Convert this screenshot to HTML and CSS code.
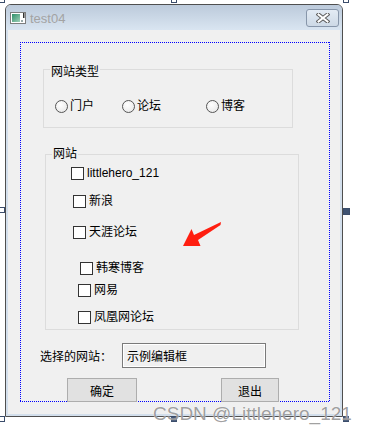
FILE: index.html
```html
<!DOCTYPE html>
<html lang="zh-CN">
<head>
  <meta charset="UTF-8" />
  <title>test04</title>
  <link rel="stylesheet" href="styles.css">
</head>
<body>
  <div class="stage">
    <div class="window">
      <div class="titlebar">
        <svg class="app-icon" width="16" height="12" viewBox="0 0 16 12">
          <defs>
            <linearGradient id="iconFill" x1="0" y1="0" x2="1" y2="1">
              <stop offset="0" stop-color="#2f8f6a"/>
              <stop offset="1" stop-color="#9fd0b8"/>
            </linearGradient>
          </defs>
          <rect x="0.5" y="0.5" width="15" height="11" fill="#fff" stroke="#7d7d7d"/>
          <rect x="2" y="2" width="8" height="8" fill="url(#iconFill)"/>
          <rect x="13" y="1" width="1.5" height="5" fill="#333"/>
          <rect x="11" y="8" width="2" height="2" fill="#9aa"/>
        </svg>
        <span class="title">test04</span>
        <button class="close-btn">
          <svg width="14" height="10" viewBox="0 0 14 10">
            <path d="M2.5 1.5 L11.5 8.5 M11.5 1.5 L2.5 8.5" stroke="#5a5a5a" stroke-width="4" stroke-linecap="square"/>
            <path d="M2.5 1.5 L11.5 8.5 M11.5 1.5 L2.5 8.5" stroke="#fff" stroke-width="2" stroke-linecap="square"/>
          </svg>
        </button>
      </div>

      <div class="client">
        <div class="form-area">
          <div class="group group-type">
            <div class="group-title">网站类型</div>
            <div class="radio-row">
              <label class="radio"><span class="radio-dot"></span>门户</label>
              <label class="radio"><span class="radio-dot"></span>论坛</label>
              <label class="radio"><span class="radio-dot"></span>博客</label>
            </div>
          </div>

          <div class="group group-sites">
            <div class="group-title">网站</div>
            <label class="check"><span class="check-box"></span>littlehero_121</label>
            <label class="check"><span class="check-box"></span>新浪</label>
            <label class="check"><span class="check-box"></span>天涯论坛</label>
            <label class="check"><span class="check-box"></span>韩寒博客</label>
            <label class="check"><span class="check-box"></span>网易</label>
            <label class="check"><span class="check-box"></span>凤凰网论坛</label>
          </div>

          <div class="selected-row">
            <span class="selected-label">选择的网站：</span>
            <div class="edit-box">示例编辑框</div>
          </div>

          <div class="button-row">
            <button class="btn btn-ok">确定</button>
            <button class="btn btn-exit">退出</button>
          </div>
        </div>
      </div>
    </div>

    <!-- designer resize handles -->
    <span class="handle h-tl"></span>
    <span class="handle h-tm"></span>
    <span class="handle h-tr"></span>
    <span class="handle h-ml"></span>
    <span class="handle filled h-mr"></span>
    <span class="handle h-bl"></span>
    <span class="handle filled h-bm"></span>
    <span class="handle filled h-br"></span>

    <svg class="arrow" width="368" height="433" viewBox="0 0 368 433">
      <polygon points="183,246 191.5,229 194,235 221,222 220.5,225 198,240 200.5,246" fill="#ff1e10"/>
    </svg>

    <div class="watermark">CSDN @Littlehero_121</div>
  </div>
</body>
</html>
```

FILE: styles.css
```css
* {
  box-sizing: border-box;
}

body {
  margin: 0;
  background-color: #fff;
  font-family: "Liberation Sans", "Noto Sans CJK SC", sans-serif;
  font-size: 12px;
  color: #000;
}

.stage {
  position: relative;
  width: 368px;
  height: 433px;
  padding: 4px 0 0 5px;
  overflow: hidden;
}

/* Window frame */
.window {
  width: 338px;
  height: 413px;
  border: 1px solid #4f4f4f;
  border-radius: 6px 6px 0 0;
  background-color: #d3dfec;
  display: flex;
  flex-direction: column;
}

.titlebar {
  height: 25px;
  flex: none;
  display: flex;
  align-items: center;
  padding: 0 3px 0 4px;
  background: linear-gradient(#bccadb, #d9e5f1);
  border-radius: 5px 5px 0 0;
}

.app-icon {
  flex: none;
}

.title {
  margin-left: 4px;
  padding-top: 2px;
  font-size: 13px;
  color: #a3a3a3;
}

.close-btn {
  margin-left: auto;
  width: 33px;
  height: 18px;
  padding: 0;
  border: 1px solid #8796aa;
  border-radius: 3px;
  background: linear-gradient(#e3ebf4, #cdd9e6);
  display: flex;
  align-items: center;
  justify-content: center;
}

.client {
  flex: 1;
  margin: 0 2px 2px;
  padding: 12px 0 0 12px;
  background-color: #f0f0f0;
}

/* selection frame: 1px on / 1px off blue dots */
.form-area {
  width: 310px;
  height: 360px;
  border: 1px solid transparent;
  background-origin: border-box;
  background-image:
    repeating-linear-gradient(90deg, #0000ff 0 1px, transparent 1px 2px),
    repeating-linear-gradient(90deg, #0000ff 0 1px, transparent 1px 2px),
    repeating-linear-gradient(180deg, #0000ff 0 1px, transparent 1px 2px),
    repeating-linear-gradient(180deg, #0000ff 0 1px, transparent 1px 2px);
  background-size: 100% 1px, 100% 1px, 1px 100%, 1px 100%;
  background-position: left top, left bottom, left top, right top;
  background-repeat: no-repeat;
}

/* Group boxes */
.group {
  border: 1px solid #dcdcdc;
}

.group-title {
  width: fit-content;
  line-height: 16px;
  padding: 0 1px;
  background-color: #f0f0f0;
}

.group-type {
  margin: 26px 0 0 22px;
  width: 250px;
  height: 59px;
}

.group-type .group-title {
  margin: -6px 0 0 6px;
}

.group-sites {
  margin: 26px 0 0 24px;
  width: 254px;
  height: 176px;
}

.group-sites .group-title {
  margin: -9px 0 0 6px;
}

.radio-row {
  display: grid;
  grid-template-columns: 67px 84px auto;
  margin: 18px 0 0 11px;
}

.radio {
  display: flex;
  align-items: center;
  gap: 2px;
  line-height: 16px;
}

.radio-dot {
  width: 13px;
  height: 13px;
  border: 1px solid #555;
  border-radius: 50%;
  background: radial-gradient(circle at 40% 35%, #fff, #e4e4e4);
}

.check {
  display: flex;
  align-items: center;
  gap: 3px;
  width: fit-content;
  line-height: 16px;
}

.check-box {
  width: 13px;
  height: 13px;
  border: 1px solid #333;
  background-color: #fff;
}

.check:nth-child(2) { margin: 3px 0 0 25px; }
.check:nth-child(3) { margin: 12px 0 0 27px; }
.check:nth-child(4) { margin: 15px 0 0 27px; }
.check:nth-child(5) { margin: 20px 0 0 34px; }
.check:nth-child(6) { margin: 6px 0 0 32px; }
.check:nth-child(7) { margin: 11px 0 0 32px; }

/* Selected site row */
.selected-row {
  display: flex;
  align-items: center;
  margin: 13px 0 0 19px;
}

.selected-label {
  width: 82px;
}

.edit-box {
  width: 144px;
  height: 25px;
  padding-left: 4px;
  border: 1px solid #7a7a7a;
  box-shadow: inset 0 0 0 1px #fff;
  background-color: #f0f0f0;
  display: flex;
  align-items: center;
}

.button-row {
  display: flex;
  gap: 84px;
  margin: 10px 0 0 46px;
}

.btn {
  height: 24px;
  padding: 0;
  border: 1px solid #adadad;
  background-color: #e1e1e1;
  font: inherit;
  color: #000;
}

.btn-ok {
  width: 70px;
}

.btn-exit {
  width: 58px;
}

/* Designer handles */
.handle {
  position: absolute;
  width: 6px;
  height: 6px;
  border: 1px solid #3b4d6b;
  background-color: #fff;
}

.handle.filled {
  background-color: #3e5272;
}

.h-tl { left: -1px; top: -3px; }
.h-tm { left: 171px; top: -3px; }
.h-tr { left: 343px; top: -3px; }
.h-ml { left: -1px; top: 207px; }
.h-mr { left: 343px; top: 208px; width: 7px; height: 7px; }
.h-bl { left: -1px; top: 416px; }
.h-bm { left: 171px; top: 416px; }
.h-br { left: 343px; top: 416px; }

.arrow {
  position: absolute;
  left: 0;
  top: 0;
  pointer-events: none;
}

.watermark {
  position: absolute;
  left: 153px;
  top: 403px;
  font-size: 19px;
  line-height: 21px;
  color: rgba(105, 105, 105, 0.65);
  text-shadow: 0 0 1px #fff;
  white-space: nowrap;
}
```
